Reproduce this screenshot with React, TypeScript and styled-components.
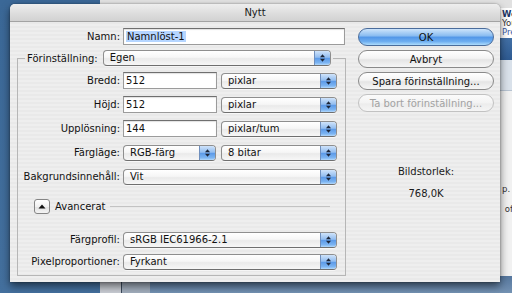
import React from 'react';
import styled, { createGlobalStyle } from 'styled-components';

const GlobalStyle = createGlobalStyle`
  html, body {
    margin: 0;
    padding: 0;
  }
  body {
    width: 512px;
    height: 293px;
    overflow: hidden;
    font-family: 'DejaVu Sans', 'Liberation Sans', sans-serif;
    font-size: 10px;
    color: #111;
  }
`;

const Desktop = styled.div`
    position: relative;
    width: 512px;
    height: 293px;
    overflow: hidden;
    background: linear-gradient(180deg, #3b6897 0%, #44709e 100%);
`;

// window behind the dialog (only its right edge shows)
const BackWindow = styled.div`
    position: absolute;
    left: 100px;
    top: 0;
    width: 440px;
    height: 278px;
    background: #e3e3e3;
    display: flex;
    flex-direction: column;
    padding-left: 400px;
    box-sizing: border-box;
`;

const BackToolbar = styled.div`
    height: 8px;
    background: #e1e1e1;
`;

const BackHeader = styled.div`
    height: 30px;
    background: #fff;
    padding: 2px 0 0 2px;
    display: flex;
    flex-direction: column;
    font-size: 8.5px;
    line-height: 9px;
    box-sizing: border-box;
    white-space: nowrap;
    overflow: hidden;
`;

const BackLine = styled.div<{ $color: string; $bold?: boolean }>`
    color: ${(p) => p.$color};
    font-weight: ${(p) => (p.$bold ? 700 : 400)};
    height: 9px;
`;

const BackBand = styled.div`
    height: 22px;
    background: linear-gradient(180deg, #4270a6 0%, #2e5a91 100%);
`;

const BackSub = styled.div`
    height: 30px;
    background: #d9e1ea;
    border-bottom: 1px solid #b7c3d1;
`;

const BackBody = styled.div`
    flex: 1;
    background: #f1f1f1;
    padding: 88px 0 0 2px;
    font-size: 8.5px;
    line-height: 20px;
    color: #333;
    white-space: nowrap;
`;

const BottomStrip = styled.div`
    position: absolute;
    left: 100px;
    right: 0;
    top: 276px;
    bottom: 0;
    display: flex;
`;

const StripPart = styled.div<{ $w?: number; $bg: string }>`
    width: ${(p) => (p.$w ? `${p.$w}px` : 'auto')};
    flex: ${(p) => (p.$w ? '0 0 auto' : '1')};
    background: ${(p) => p.$bg};
`;

const Dialog = styled.div`
    position: absolute;
    left: 10px;
    top: 4px;
    width: 490px;
    height: 278px;
    display: flex;
    flex-direction: column;
    border-radius: 5px 5px 0 0;
    overflow: hidden;
    box-shadow: 0 4px 9px rgba(0, 0, 0, 0.55), 0 0 2px rgba(0, 0, 0, 0.4);
    background: repeating-linear-gradient(180deg, #eeeeee 0 2px, #e9e9e9 2px 4px);
`;

const TitleBar = styled.div`
    height: 17px;
    flex: 0 0 auto;
    display: flex;
    align-items: center;
    justify-content: center;
    background: linear-gradient(180deg, #eeeeee 0%, #dcdcdc 60%, #d2d2d2 100%);
    border-bottom: 1px solid #a3a3a3;
    color: #1a1a1a;
`;

const Body = styled.div`
    flex: 1;
    display: flex;
    gap: 12px;
    padding: 6px 6px 0 7px;
`;

const LeftCol = styled.div`
    width: 329px;
    display: flex;
    flex-direction: column;
`;

const Row = styled.div<{ $mt?: number; $pl?: number }>`
    display: flex;
    align-items: center;
    height: 17px;
    margin-top: ${(p) => p.$mt ?? 0}px;
    padding-left: ${(p) => p.$pl ?? 0}px;
    flex: 0 0 auto;
`;

const Label = styled.div`
    width: 102px;
    margin-right: 3px;
    text-align: right;
    white-space: nowrap;
    color: #111;
`;

const Field = styled.div<{ $w: number }>`
    width: ${(p) => p.$w}px;
    height: 17px;
    box-sizing: border-box;
    background: #fff;
    border: 1px solid #9b9b9b;
    border-top-color: #6f6f6f;
    box-shadow: inset 0 1px 1px rgba(0, 0, 0, 0.12);
    padding-left: 2px;
    line-height: 15px;
    white-space: nowrap;
    overflow: hidden;
`;

const Selected = styled.span`
    background: #b5d5ff;
    padding: 0 1px;
`;

const PopupBox = styled.div<{ $w: number }>`
    width: ${(p) => p.$w}px;
    height: 16px;
    box-sizing: border-box;
    display: flex;
    border: 1px solid #8e8e8e;
    border-bottom-color: #6f6f6f;
    border-radius: 4px;
    background: linear-gradient(180deg, #ffffff 0%, #f6f6f6 45%, #eaeaea 55%, #f7f7f7 100%);
    box-shadow: 0 1px 0 rgba(255, 255, 255, 0.6);
    flex: 0 0 auto;
`;

const PopupText = styled.div`
    flex: 1;
    padding-left: 6px;
    line-height: 14px;
    white-space: nowrap;
    overflow: hidden;
    color: #111;
`;

const PopupArrows = styled.div`
    width: 15px;
    display: flex;
    align-items: center;
    justify-content: center;
    border-left: 1px solid #6f8fbd;
    border-radius: 0 3px 3px 0;
    background: linear-gradient(180deg, #cfe3fa 0%, #92bdf0 45%, #5c9ae8 52%, #7db5f2 85%, #b5dafc 100%);
`;

const Popup = ({ w, value }: { w: number; value: string }) => (
    <PopupBox $w={w}>
        <PopupText>{value}</PopupText>
        <PopupArrows>
            <svg width="7" height="10" viewBox="0 0 7 10">
                <path d="M1 4.2 L3.5 1.2 L6 4.2 Z" fill="#1d2638" />
                <path d="M1 5.8 L6 5.8 L3.5 8.8 Z" fill="#1d2638" />
            </svg>
        </PopupArrows>
    </PopupBox>
);

const Group = styled.fieldset`
    width: 329px;
    box-sizing: border-box;
    margin: 5px 0 0 0;
    padding: 6px 0 5px 0;
    border: 1px solid #b6b6b6;
    min-inline-size: 0;
    display: flex;
    flex-direction: column;
    gap: 0;
`;

const Legend = styled.legend`
    margin-left: 7px;
    padding: 0 2px;
    display: flex;
    align-items: center;
    gap: 5px;
    height: 16px;
`;

const LegendLabel = styled.span`
    white-space: nowrap;
    color: #111;
`;

const Gap = styled.div<{ $w?: number }>`
    width: ${(p) => p.$w ?? 4}px;
    flex: 0 0 auto;
`;

const DisclosureButton = styled.div`
    width: 16px;
    height: 15px;
    box-sizing: border-box;
    border: 1px solid #858585;
    border-radius: 3px;
    background: linear-gradient(180deg, #ffffff 0%, #f1f1f1 50%, #e2e2e2 55%, #f4f4f4 100%);
    display: flex;
    align-items: center;
    justify-content: center;
`;

const AdvancedText = styled.span`
    margin-left: 5px;
    color: #111;
`;

const Rule = styled.div`
    flex: 1;
    height: 1px;
    background: #c3c3c3;
    margin: 0 15px 0 5px;
`;

const RightCol = styled.div`
    width: 136px;
    display: flex;
    flex-direction: column;
    gap: 4px;
`;

const PushButton = styled.div<{ $variant?: 'default' | 'disabled' }>`
    height: 18px;
    box-sizing: border-box;
    border-radius: 9px;
    display: flex;
    align-items: center;
    justify-content: center;
    white-space: nowrap;
    border: 1px solid ${(p) =>
        p.$variant === 'default' ? '#4a6c9b' : p.$variant === 'disabled' ? '#c2c2c2' : '#8a8a8a'};
    color: ${(p) => (p.$variant === 'disabled' ? '#a2a2a2' : '#111')};
    background: ${(p) =>
        p.$variant === 'default'
            ? 'linear-gradient(180deg, #cde4fb 0%, #8bbdf1 42%, #5397e8 52%, #6eaef0 78%, #addcfc 100%)'
            : p.$variant === 'disabled'
            ? 'linear-gradient(180deg, #fbfbfb 0%, #f3f3f3 50%, #ececec 55%, #f5f5f5 100%)'
            : 'linear-gradient(180deg, #ffffff 0%, #f4f4f4 45%, #e5e5e5 55%, #f6f6f6 100%)'};
`;

const SizeInfo = styled.div`
    margin-top: 50px;
    display: flex;
    flex-direction: column;
    align-items: center;
    gap: 10px;
    line-height: 12px;
    color: #1a1a1a;
`;

const rows = [
    { label: 'Bredd:', value: '512', unit: 'pixlar' },
    { label: 'Höjd:', value: '512', unit: 'pixlar' },
    { label: 'Upplösning:', value: '144', unit: 'pixlar/tum' },
];

const App = () => {
    return (
        <>
            <GlobalStyle />
            <Desktop>
                <BackWindow>
                    <BackToolbar />
                    <BackHeader>
                        <BackLine $color="#1d3566" $bold>Welcome</BackLine>
                        <BackLine $color="#333">You</BackLine>
                        <BackLine $color="#3a5ea6">Preferences</BackLine>
                    </BackHeader>
                    <BackBand />
                    <BackSub />
                    <BackBody>
                        <div>p. 2</div>
                        <div>&nbsp;of</div>
                    </BackBody>
                </BackWindow>

                <BottomStrip>
                    <StripPart $w={21} $bg="#c9cdd4" />
                    <StripPart $w={1} $bg="#3b4a5c" />
                    <StripPart $w={28} $bg="#a2aebd" />
                    <StripPart $bg="linear-gradient(180deg, #56779e 0%, #7492b3 100%)" />
                </BottomStrip>

                <Dialog>
                    <TitleBar>Nytt</TitleBar>
                    <Body>
                        <LeftCol>
                            <Row $pl={1}>
                                <Label>Namn:</Label>
                                <Field $w={222}>
                                    <Selected>Namnlöst-1</Selected>
                                </Field>
                            </Row>

                            <Group>
                                <Legend>
                                    <LegendLabel>Förinställning:</LegendLabel>
                                    <Popup w={228} value="Egen" />
                                </Legend>

                                {rows.map((r, i) => (
                                    <Row key={r.label} $mt={i === 0 ? 0 : 7}>
                                        <Label>{r.label}</Label>
                                        <Field $w={94}>{r.value}</Field>
                                        <Gap />
                                        <Popup w={116} value={r.unit} />
                                    </Row>
                                ))}
                                <Row $mt={7}>
                                    <Label>Färgläge:</Label>
                                    <Popup w={93} value="RGB-färg" />
                                    <Gap $w={5} />
                                    <Popup w={116} value="8 bitar" />
                                </Row>
                                <Row $mt={7}>
                                    <Label>Bakgrundsinnehåll:</Label>
                                    <Popup w={214} value="Vit" />
                                </Row>

                                <Row $mt={13} $pl={16}>
                                    <DisclosureButton>
                                        <svg width="8" height="5" viewBox="0 0 8 5">
                                            <path d="M0.5 4.5 L4 0.5 L7.5 4.5 Z" fill="#111" />
                                        </svg>
                                    </DisclosureButton>
                                    <AdvancedText>Avancerat</AdvancedText>
                                    <Rule />
                                </Row>

                                <Row $mt={16}>
                                    <Label>Färgprofil:</Label>
                                    <Popup w={214} value="sRGB IEC61966-2.1" />
                                </Row>
                                <Row $mt={5}>
                                    <Label>Pixelproportioner:</Label>
                                    <Popup w={214} value="Fyrkant" />
                                </Row>
                            </Group>
                        </LeftCol>

                        <RightCol>
                            <PushButton $variant="default">OK</PushButton>
                            <PushButton>Avbryt</PushButton>
                            <PushButton>Spara förinställning...</PushButton>
                            <PushButton $variant="disabled">Ta bort förinställning...</PushButton>
                            <SizeInfo>
                                <span>Bildstorlek:</span>
                                <span>768,0K</span>
                            </SizeInfo>
                        </RightCol>
                    </Body>
                </Dialog>
            </Desktop>
        </>
    );
};

export default App;
